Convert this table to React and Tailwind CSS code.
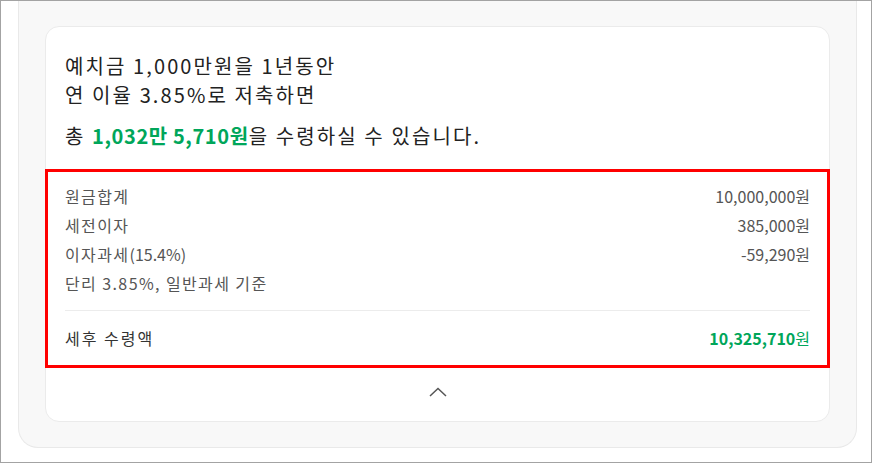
import React from 'react';

const rows = [
  { label: '원금합계', value: '10,000,000원' },
  { label: '세전이자', value: '385,000원' },
  { label: '이자과세', extra: '(15.4%)', value: '-59,290원' },
];

const App = () => {
  return (
    <div
      className="w-[872px] h-[463px] bg-white border border-[#a3a3a3] overflow-hidden"
      style={{ fontFamily: '"Noto Sans CJK KR", "Noto Sans", sans-serif' }}
    >
      {/* Outer panel */}
      <div className="ml-[17px] w-[839px] h-[447px] bg-[#f8f8f8] border-x border-b border-[#e9e9e9] rounded-b-[20px] px-[26px] pt-[25px]">
        {/* Result card */}
        <div className="bg-white border border-[#ebebeb] rounded-[14px] h-[396px] flex flex-col">
          <div className="px-[19px] pt-[24px] text-[20px] leading-[29px] text-[#222] tracking-[2.1px]">
            <p>예치금 1,000만원을 1년동안</p>
            <p>연 이율 3.85%로 저축하면</p>
            <p className="mt-[12px]">
              총 <span className="font-bold text-[#00a65a] tracking-[0.6px]">1,032만 5,710원</span>을 수령하실 수 있습니다.
            </p>
          </div>

          {/* Breakdown */}
          <div className="mt-[19px] -mx-px border-[3px] border-[#ff0000] px-[17px] pt-[10px] pb-[12px] text-[16px] leading-[29px] text-[#555]">
            {rows.map(row => (
              <div key={row.label} className="flex justify-between">
                <span>
                  <span className="tracking-[1.4px]">{row.label}</span>
                  {row.extra}
                </span>
                <span>{row.value}</span>
              </div>
            ))}
            <p className="tracking-[1.4px]">단리 3.85%, 일반과세 기준</p>
            <div className="mt-[12px] mb-[13px] border-t border-[#ececec]" />
            <div className="flex justify-between">
              <span className="text-[#333] tracking-[2px]">세후 수령액</span>
              <span className="text-[#00a65a]">
                <span className="font-bold">10,325,710</span>원
              </span>
            </div>
          </div>

          <div className="flex-1 flex items-center justify-center pb-[6px]">
            <svg width="18" height="10" viewBox="0 0 18 10" fill="none">
              <path d="M1 9 L9 1.5 L17 9" stroke="#555" strokeWidth="1.5" />
            </svg>
          </div>
        </div>
      </div>
    </div>
  );
};

export default App;
